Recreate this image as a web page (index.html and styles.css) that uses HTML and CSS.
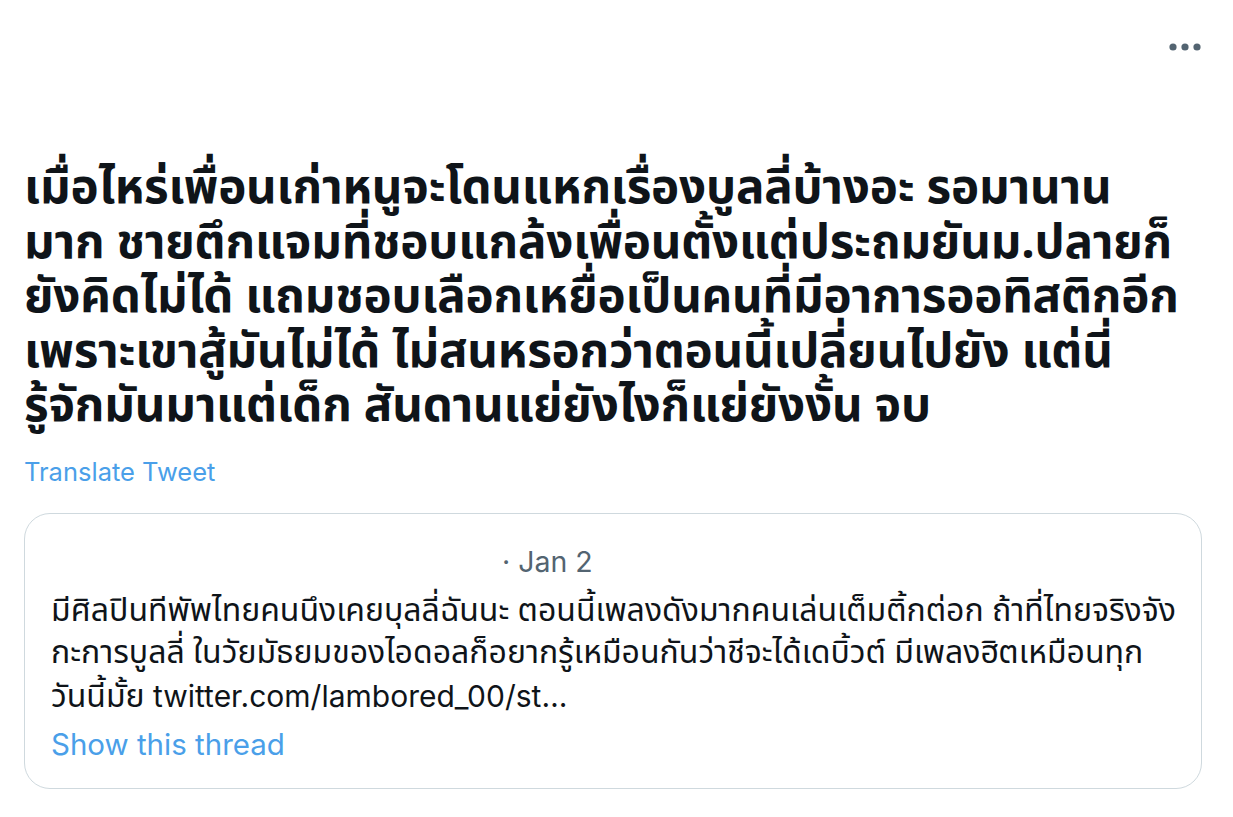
FILE: index.html
```html
<!DOCTYPE html>
<html lang="th">
<head>
<meta charset="utf-8">
<link rel="stylesheet" href="styles.css">
</head>
<body>
<div class="tweet">
  <div class="top">
    <button class="more" aria-label="More">
      <svg width="36" height="10" viewBox="0 0 36 10"><circle cx="6" cy="5" r="3.6" fill="#536471"/><circle cx="18" cy="5" r="3.6" fill="#536471"/><circle cx="30" cy="5" r="3.6" fill="#536471"/></svg>
    </button>
  </div>
  <div class="text">เมื่อไหร่เพื่อนเก่าหนูจะโดนแหกเรื่องบูลลี่บ้างอะ รอมานาน<br>มาก ชายตึกแจมที่ชอบแกล้งเพื่อนตั้งแต่ประถมยันม.ปลายก็<br>ยังคิดไม่ได้ แถมชอบเลือกเหยื่อเป็นคนที่มีอาการออทิสติกอีก<br>เพราะเขาสู้มันไม่ได้ ไม่สนหรอกว่าตอนนี้เปลี่ยนไปยัง แต่นี่<br>รู้จักมันมาแต่เด็ก สันดานแย่ยังไงก็แย่ยังงั้น จบ</div>
  <a class="translate">Translate Tweet</a>
  <div class="quote">
    <div class="qhead"><span class="qdate">· Jan 2</span></div>
    <div class="qtext">มีศิลปินทีพัพไทยคนนึงเคยบุลลี่ฉันนะ ตอนนี้เพลงดังมากคนเล่นเต็มติ้กต่อก ถ้าที่ไทยจริงจัง<br>กะการบูลลี่ ในวัยมัธยมของไอดอลก็อยากรู้เหมือนกันว่าชีจะได้เดบิ้วต์ มีเพลงฮิตเหมือนทุก<br>วันนี้มั้ย <span class="url">twitter.com/lambored_00/st…</span></div>
    <a class="thread">Show this thread</a>
  </div>
</div>
</body>
</html>
```
FILE: styles.css
```css
html, body {
  margin: 0;
  padding: 0;
  background: #ffffff;
}
body {
  font-family: "Noto Sans Thai", "Noto Sans", Roboto, sans-serif;
  color: #0f1419;
}
.tweet {
  width: 1178px;
  padding: 0 0 0 24px;
}
.top {
  height: 150px;
  display: flex;
  justify-content: flex-end;
  align-items: flex-start;
}
.more {
  margin-top: 42px;
  margin-right: -1px;
  border: 0;
  background: none;
  padding: 0;
  line-height: 0;
}
.text {
  font-size: 47.5px;
  line-height: 54.5px;
  font-weight: 700;
  white-space: nowrap;
  padding-top: 12px;
  letter-spacing: -0.2px;
}
.translate {
  display: block;
  color: #4a9fe9;
  font-size: 25.5px;
  line-height: 32px;
  margin-top: 21px;
  font-family: Inter, Roboto, sans-serif;
}
.quote {
  margin-top: 25px;
  border: 1.5px solid #cfd9de;
  border-radius: 26px;
  height: 276px;
  box-sizing: border-box;
  padding: 30px 26px 0 26px;
}
.qhead {
  height: 48px;
  padding-left: 451px;
}
.qdate {
  font-size: 28.5px;
  color: #536471;
  font-family: Inter, Roboto, sans-serif;
}
.qtext {
  font-size: 32px;
  line-height: 42.5px;
  white-space: nowrap;
  margin-top: -2px;
}
.url {
  font-family: Inter, Roboto, sans-serif;
  font-size: 30px;
}
.thread {
  display: block;
  color: #4a9fe9;
  font-size: 29.5px;
  line-height: 40px;
  margin-top: 6px;
  font-family: Inter, Roboto, sans-serif;
}
```
